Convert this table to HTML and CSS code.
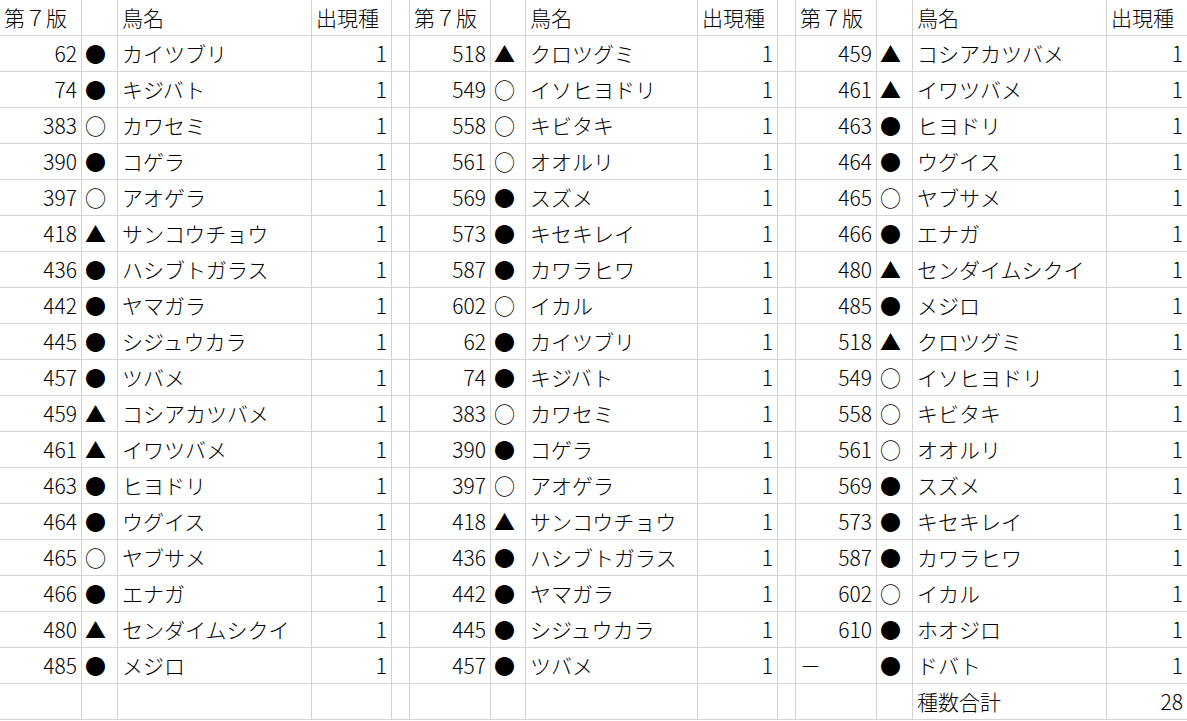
FILE: index.html
```html
<!DOCTYPE html>
<html lang="ja">
<head>
<meta charset="utf-8">
<title>鳥名一覧</title>
<link rel="stylesheet" href="styles.css">
</head>
<body>
<div class="sheet">
<div class="h">第７版</div><div class="m"></div><div class="h">鳥名</div><div class="h">出現種</div><div class="s"></div>
<div class="h">第７版</div><div class="m"></div><div class="h">鳥名</div><div class="h">出現種</div><div class="s"></div>
<div class="h">第７版</div><div class="m"></div><div class="h">鳥名</div><div class="h">出現種</div>

<div class="n">62</div><div class="m">●</div><div class="t">カイツブリ</div><div class="c">1</div><div class="s"></div>
<div class="n">518</div><div class="m">▲</div><div class="t">クロツグミ</div><div class="c">1</div><div class="s"></div>
<div class="n">459</div><div class="m">▲</div><div class="t">コシアカツバメ</div><div class="c">1</div>

<div class="n">74</div><div class="m">●</div><div class="t">キジバト</div><div class="c">1</div><div class="s"></div>
<div class="n">549</div><div class="m">○</div><div class="t">イソヒヨドリ</div><div class="c">1</div><div class="s"></div>
<div class="n">461</div><div class="m">▲</div><div class="t">イワツバメ</div><div class="c">1</div>

<div class="n">383</div><div class="m">○</div><div class="t">カワセミ</div><div class="c">1</div><div class="s"></div>
<div class="n">558</div><div class="m">○</div><div class="t">キビタキ</div><div class="c">1</div><div class="s"></div>
<div class="n">463</div><div class="m">●</div><div class="t">ヒヨドリ</div><div class="c">1</div>

<div class="n">390</div><div class="m">●</div><div class="t">コゲラ</div><div class="c">1</div><div class="s"></div>
<div class="n">561</div><div class="m">○</div><div class="t">オオルリ</div><div class="c">1</div><div class="s"></div>
<div class="n">464</div><div class="m">●</div><div class="t">ウグイス</div><div class="c">1</div>

<div class="n">397</div><div class="m">○</div><div class="t">アオゲラ</div><div class="c">1</div><div class="s"></div>
<div class="n">569</div><div class="m">●</div><div class="t">スズメ</div><div class="c">1</div><div class="s"></div>
<div class="n">465</div><div class="m">○</div><div class="t">ヤブサメ</div><div class="c">1</div>

<div class="n">418</div><div class="m">▲</div><div class="t">サンコウチョウ</div><div class="c">1</div><div class="s"></div>
<div class="n">573</div><div class="m">●</div><div class="t">キセキレイ</div><div class="c">1</div><div class="s"></div>
<div class="n">466</div><div class="m">●</div><div class="t">エナガ</div><div class="c">1</div>

<div class="n">436</div><div class="m">●</div><div class="t">ハシブトガラス</div><div class="c">1</div><div class="s"></div>
<div class="n">587</div><div class="m">●</div><div class="t">カワラヒワ</div><div class="c">1</div><div class="s"></div>
<div class="n">480</div><div class="m">▲</div><div class="t">センダイムシクイ</div><div class="c">1</div>

<div class="n">442</div><div class="m">●</div><div class="t">ヤマガラ</div><div class="c">1</div><div class="s"></div>
<div class="n">602</div><div class="m">○</div><div class="t">イカル</div><div class="c">1</div><div class="s"></div>
<div class="n">485</div><div class="m">●</div><div class="t">メジロ</div><div class="c">1</div>

<div class="n">445</div><div class="m">●</div><div class="t">シジュウカラ</div><div class="c">1</div><div class="s"></div>
<div class="n">62</div><div class="m">●</div><div class="t">カイツブリ</div><div class="c">1</div><div class="s"></div>
<div class="n">518</div><div class="m">▲</div><div class="t">クロツグミ</div><div class="c">1</div>

<div class="n">457</div><div class="m">●</div><div class="t">ツバメ</div><div class="c">1</div><div class="s"></div>
<div class="n">74</div><div class="m">●</div><div class="t">キジバト</div><div class="c">1</div><div class="s"></div>
<div class="n">549</div><div class="m">○</div><div class="t">イソヒヨドリ</div><div class="c">1</div>

<div class="n">459</div><div class="m">▲</div><div class="t">コシアカツバメ</div><div class="c">1</div><div class="s"></div>
<div class="n">383</div><div class="m">○</div><div class="t">カワセミ</div><div class="c">1</div><div class="s"></div>
<div class="n">558</div><div class="m">○</div><div class="t">キビタキ</div><div class="c">1</div>

<div class="n">461</div><div class="m">▲</div><div class="t">イワツバメ</div><div class="c">1</div><div class="s"></div>
<div class="n">390</div><div class="m">●</div><div class="t">コゲラ</div><div class="c">1</div><div class="s"></div>
<div class="n">561</div><div class="m">○</div><div class="t">オオルリ</div><div class="c">1</div>

<div class="n">463</div><div class="m">●</div><div class="t">ヒヨドリ</div><div class="c">1</div><div class="s"></div>
<div class="n">397</div><div class="m">○</div><div class="t">アオゲラ</div><div class="c">1</div><div class="s"></div>
<div class="n">569</div><div class="m">●</div><div class="t">スズメ</div><div class="c">1</div>

<div class="n">464</div><div class="m">●</div><div class="t">ウグイス</div><div class="c">1</div><div class="s"></div>
<div class="n">418</div><div class="m">▲</div><div class="t">サンコウチョウ</div><div class="c">1</div><div class="s"></div>
<div class="n">573</div><div class="m">●</div><div class="t">キセキレイ</div><div class="c">1</div>

<div class="n">465</div><div class="m">○</div><div class="t">ヤブサメ</div><div class="c">1</div><div class="s"></div>
<div class="n">436</div><div class="m">●</div><div class="t">ハシブトガラス</div><div class="c">1</div><div class="s"></div>
<div class="n">587</div><div class="m">●</div><div class="t">カワラヒワ</div><div class="c">1</div>

<div class="n">466</div><div class="m">●</div><div class="t">エナガ</div><div class="c">1</div><div class="s"></div>
<div class="n">442</div><div class="m">●</div><div class="t">ヤマガラ</div><div class="c">1</div><div class="s"></div>
<div class="n">602</div><div class="m">○</div><div class="t">イカル</div><div class="c">1</div>

<div class="n">480</div><div class="m">▲</div><div class="t">センダイムシクイ</div><div class="c">1</div><div class="s"></div>
<div class="n">445</div><div class="m">●</div><div class="t">シジュウカラ</div><div class="c">1</div><div class="s"></div>
<div class="n">610</div><div class="m">●</div><div class="t">ホオジロ</div><div class="c">1</div>

<div class="n">485</div><div class="m">●</div><div class="t">メジロ</div><div class="c">1</div><div class="s"></div>
<div class="n">457</div><div class="m">●</div><div class="t">ツバメ</div><div class="c">1</div><div class="s"></div>
<div class="t dash">－</div><div class="m">●</div><div class="t">ドバト</div><div class="c">1</div>

<div class="n"></div><div class="m"></div><div class="t"></div><div class="c"></div><div class="s"></div>
<div class="n"></div><div class="m"></div><div class="t"></div><div class="c"></div><div class="s"></div>
<div class="n"></div><div class="m"></div><div class="t">種数合計</div><div class="c">28</div>
</div>
</body>
</html>
```

FILE: styles.css
```css
html, body {
  margin: 0;
  padding: 0;
  background: #ffffff;
  overflow: hidden;
}

.sheet {
  display: grid;
  grid-template-columns: 82px 36px 194px 80px 18px 81px 35px 172px 80px 18px 81px 36px 194px 81px;
  grid-auto-rows: 36px;
  padding-top: 1px;
  margin-top: -1px;
  width: 1188px;
  font-family: "Noto Sans CJK JP", "Noto Sans", sans-serif;
  font-weight: 300;
  font-size: 21px;
  color: #000000;
  line-height: 1;
}

.sheet > div {
  box-sizing: border-box;
  border-right: 1px solid #d4d4d4;
  border-bottom: 1px solid #d4d4d4;
  display: flex;
  align-items: center;
  white-space: nowrap;
  overflow: hidden;
}

.h, .t {
  justify-content: flex-start;
  padding-left: 4px;
}

.n, .c {
  justify-content: flex-end;
  padding-right: 4px;
}

.m {
  justify-content: flex-start;
  padding-left: 3px;
}

.dash {
  padding-left: 4px;
}
```
